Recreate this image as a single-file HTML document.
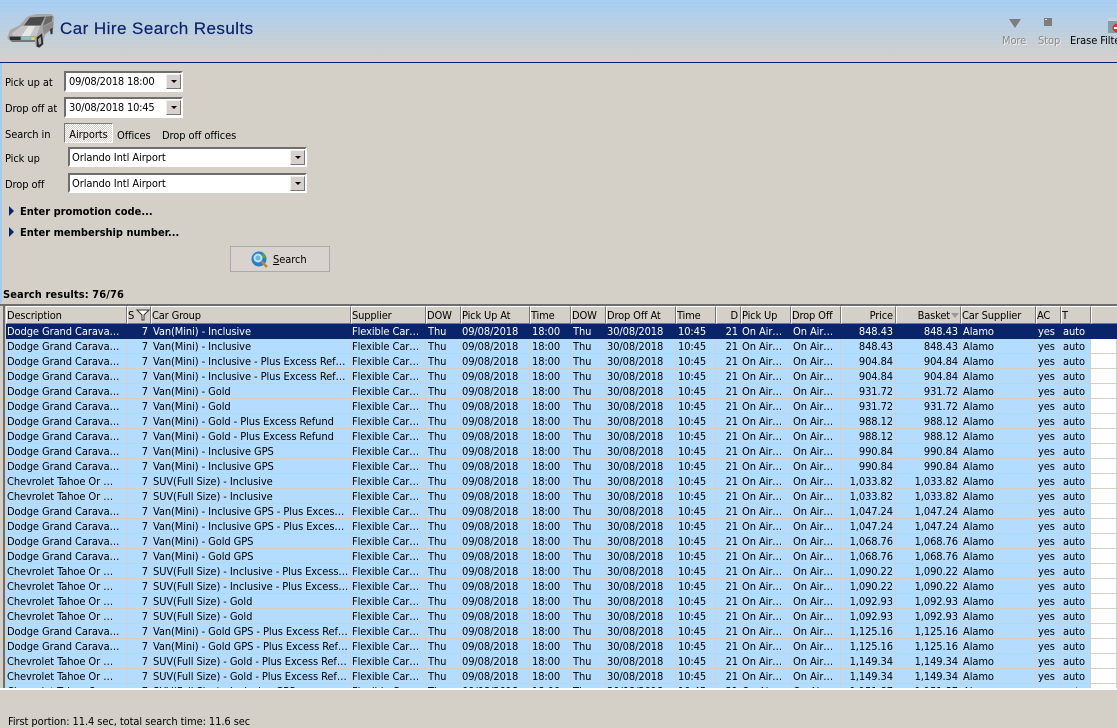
<!DOCTYPE html>
<html><head><meta charset="utf-8"><title>Car Hire Search Results</title>
<style>
html,body{margin:0;padding:0}
body{width:1117px;height:726px;overflow:hidden;position:relative;background:#d4d0c8;font:11px "DejaVu Sans Condensed","DejaVu Sans","Liberation Sans",sans-serif;color:#000;letter-spacing:-.08px}
.a{position:absolute;white-space:nowrap}
#top{left:0;top:0;width:1117px;height:62px;background:repeating-linear-gradient(0deg,rgba(255,255,255,.03) 0 2px,transparent 2px 4px),linear-gradient(#a6cdf5,#d4d0c8)}
#ln{left:0;top:62px;width:1117px;height:1px;background:#0a246a}
#edge{left:0;top:63px;width:2px;height:240px;background:#a6caf0}
h1{position:absolute;margin:0;left:60px;top:19px;font:400 17px/20px "Liberation Sans",sans-serif;letter-spacing:.45px;color:#0a246a;white-space:nowrap;-webkit-text-stroke:.2px #0a246a}
.field{box-sizing:border-box;position:absolute;background:#fff;border:2px solid;border-color:#6e6e6e #fff #fff #6e6e6e;line-height:18px;padding-left:2px;white-space:nowrap}
.dt{width:119px;height:21px;left:64px;padding-left:3px;letter-spacing:-.2px}
.dd{width:239px;height:20px;left:68px}
.btn{position:absolute;right:0;top:1px;width:15px;height:15px;box-sizing:border-box;background:#d8d0cc;border:1px solid;border-color:#eee #777 #777 #eee}
.btn:after{content:"";position:absolute;left:4px;top:5px;border:3px solid transparent;border-top:3px solid #000;border-bottom:0}
.tri{position:absolute;width:0;height:0;border:5px solid transparent;border-left:5px solid #0a246a;border-right:0}
b.a{font-weight:700;letter-spacing:0;font-family:"DejaVu Sans Condensed","DejaVu Sans",sans-serif}
#grid{left:6px;top:306px;width:1111px;height:382px;overflow:hidden;background:#fff}
table{border-collapse:separate;border-spacing:0;table-layout:fixed;width:1111px}
th{box-sizing:border-box;height:18px;padding:0 2px 0 0;font-weight:400;text-align:left;background:#d4d0c8;border:1px solid;border-color:#fff #777 #777 #fff;overflow:hidden;white-space:nowrap;letter-spacing:-.15px}
td{box-sizing:border-box;height:15px;padding:1px 0 0 2px;background:#b3dcff;border-right:1px solid #d4d0c8;border-bottom:1px solid #d4d0c8;overflow:hidden;white-space:nowrap;line-height:13px}
td:nth-child(1),td:nth-child(4),td:nth-child(6),td:nth-child(9),td:nth-child(12){padding-left:1px}
tr.s td{background:#0a246a;color:#fff;border-color:#0a246a}
td:nth-child(19){background:#fff}
tr.s td:nth-child(19){background:#0a246a}
td:nth-child(2),td:nth-child(11),td:nth-child(14),td:nth-child(15),th.r{text-align:right;padding:1px 2px 0 0}
th.r{padding-top:0}
</style></head><body>
<div class="a" id="top"></div><div class="a" id="ln"></div><div class="a" id="edge"></div>
<svg class="a" style="left:0;top:0" width="60" height="50" viewBox="0 0 180 150"><path d="M22 112L30 90L60 75L82 50L110 42L155 42L163 52L160 85L135 105L128 135L120 143L108 140L105 125L35 125L24 118Z" fill="#a8a8a8"/><path d="M72 76L90 52L135 50L122 76Z" fill="#4a4a4a"/><path d="M138 50L158 48L155 65L128 78Z" fill="#6a6a6a"/><path d="M128 80L160 65L158 85L132 103Z" fill="#8a8a8a"/><path d="M35 100L65 78L120 78L110 108L40 108Z" fill="#c4c4c4"/><path d="M65 108L85 78L105 78L90 108Z" fill="#e6e6e6"/><path d="M28 110L62 110L62 120L30 120Z" fill="#2e2e2e"/><path d="M68 110L92 110L90 118L68 118Z" fill="#7fc4d8"/><path d="M94 112h10v8h-10z" fill="#e8d840"/><path d="M30 120L105 120L105 126L36 126Z" fill="#777"/><path d="M110 112L126 100L130 132L118 143L110 140Z" fill="#2c2c2c"/><path d="M114 118L122 110L124 130L117 135Z" fill="#aaa"/><path d="M150 88l8-5v18l-6 3Z" fill="#333"/></svg>
<h1>Car Hire Search Results</h1>
<svg class="a" style="left:1009px;top:18px" width="12" height="11"><path d="M0 1H12L6 10Z" fill="#7d7d7d"/></svg>
<svg class="a" style="left:1044px;top:18px" width="8" height="8"><rect width="8" height="8" fill="#7d7d7d"/><path d="M1 1h2v1H1z" fill="#ddd"/></svg>
<div class="a" style="left:1002px;top:34px;color:#8a8a8a;text-shadow:1px 1px 0 #eee">More</div>
<div class="a" style="left:1038px;top:34px;color:#8a8a8a;text-shadow:1px 1px 0 #eee">Stop</div>
<div class="a" style="left:1070px;top:34px">Erase Filter</div>
<svg class="a" style="left:1108px;top:18px" width="9" height="15"><rect x="0" y="1" width="9" height="14" fill="#7f9dab"/><rect x="0" y="0" width="9" height="3" fill="#c5d5dc"/><circle cx="9" cy="10" r="4.5" fill="#d8322a"/><rect x="6" y="9" width="3" height="2" fill="#fff"/></svg>

<div class="a" style="left:5px;top:76px">Pick up at</div>
<div class="field dt" style="top:71px">09/08/2018 18:00<span class="btn"></span></div>
<div class="a" style="left:5px;top:102px">Drop off at</div>
<div class="field dt" style="top:97px">30/08/2018 10:45<span class="btn"></span></div>
<div class="a" style="left:5px;top:128px">Search in</div>
<div class="a" style="left:64px;top:123px;width:49px;height:20px;box-sizing:border-box;border:1px solid;border-color:#777 #fff #fff #777;background:repeating-conic-gradient(#fff 0 25%,#d4d0c8 0 50%) 0 0/2px 2px;text-align:center;line-height:21px">Airports</div>
<div class="a" style="left:117px;top:129px">Offices</div>
<div class="a" style="left:162px;top:129px">Drop off offices</div>
<div class="a" style="left:5px;top:152px">Pick up</div>
<div class="field dd" style="top:147px">Orlando Intl Airport<span class="btn"></span></div>
<div class="a" style="left:5px;top:178px">Drop off</div>
<div class="field dd" style="top:173px">Orlando Intl Airport<span class="btn"></span></div>
<div class="tri" style="left:9px;top:206px"></div>
<b class="a" style="left:20px;top:205px">Enter promotion code...</b>
<div class="tri" style="left:9px;top:227px"></div>
<b class="a" style="left:20px;top:226px">Enter membership number...</b>
<div class="a" style="left:230px;top:246px;width:100px;height:26px;box-sizing:border-box;background:#d8d3cf;border:1px solid;border-color:#eee #888 #888 #eee;outline:1px solid #aaa;outline-offset:-1px"></div>
<svg class="a" style="left:251px;top:251px" width="17" height="17"><circle cx="8" cy="8" r="7.5" fill="#2a7ec8"/><path d="M12 1.5a7.5 7.5 0 0 1 3 6l-4-1z" fill="#5aa83a"/><circle cx="7" cy="7" r="4.5" fill="#bfe3ef"/><circle cx="7" cy="7" r="2.5" fill="#6fb4dc"/><path d="M10.5 10.5L16 16" stroke="#b58b2a" stroke-width="2.5"/></svg>
<div class="a" style="left:273px;top:253px"><u>S</u>earch</div>
<b class="a" style="left:3px;top:288px;letter-spacing:.1px">Search results: 76/76</b>
<div class="a" style="left:0;top:304px;width:1117px;height:2px;background:#6e6e6e"></div>
<div class="a" style="left:3px;top:304px;width:2px;height:385px;background:#6e6e6e"></div>
<div class="a" style="left:0;top:688px;width:1117px;height:2px;background:#fff"></div>
<div class="a" id="grid">
<table><colgroup><col width="121"><col width="24"><col width="200"><col width="75"><col width="35"><col width="69"><col width="41"><col width="35"><col width="70"><col width="40"><col width="25"><col width="50"><col width="50"><col width="55"><col width="65"><col width="75"><col width="25"><col width="30"><col width="26"></colgroup>
<tr><th>Description</th><th style="position:relative">S<svg style="position:absolute;left:8px;top:2px" width="14" height="12"><path d="M1 1H13L8 6V11H6V6Z" fill="#fff" stroke="#333"/></svg></th><th>Car Group</th><th>Supplier</th><th>DOW</th><th>Pick Up At</th><th>Time</th><th>DOW</th><th>Drop Off At</th><th>Time</th><th class="r">D</th><th>Pick Up</th><th>Drop Off</th><th class="r">Price</th><th class="r" style="padding-right:10px;position:relative">Basket<svg style="position:absolute;right:1px;top:6px" width="8" height="5"><path d="M0 0H8L4 5Z" fill="#999"/></svg></th><th>Car Supplier</th><th>AC</th><th>T</th><th style="border-right:0"></th></tr>
<tr class="s"><td>Dodge Grand Carava…</td><td>7</td><td>Van(Mini) - Inclusive</td><td>Flexible Car…</td><td>Thu</td><td>09/08/2018</td><td>18:00</td><td>Thu</td><td>30/08/2018</td><td>10:45</td><td>21</td><td>On Air…</td><td>On Air…</td><td>848.43</td><td>848.43</td><td>Alamo</td><td>yes</td><td>auto</td><td></td></tr>
<tr><td>Dodge Grand Carava…</td><td>7</td><td>Van(Mini) - Inclusive</td><td>Flexible Car…</td><td>Thu</td><td>09/08/2018</td><td>18:00</td><td>Thu</td><td>30/08/2018</td><td>10:45</td><td>21</td><td>On Air…</td><td>On Air…</td><td>848.43</td><td>848.43</td><td>Alamo</td><td>yes</td><td>auto</td><td></td></tr>
<tr><td>Dodge Grand Carava…</td><td>7</td><td>Van(Mini) - Inclusive - Plus Excess Ref…</td><td>Flexible Car…</td><td>Thu</td><td>09/08/2018</td><td>18:00</td><td>Thu</td><td>30/08/2018</td><td>10:45</td><td>21</td><td>On Air…</td><td>On Air…</td><td>904.84</td><td>904.84</td><td>Alamo</td><td>yes</td><td>auto</td><td></td></tr>
<tr><td>Dodge Grand Carava…</td><td>7</td><td>Van(Mini) - Inclusive - Plus Excess Ref…</td><td>Flexible Car…</td><td>Thu</td><td>09/08/2018</td><td>18:00</td><td>Thu</td><td>30/08/2018</td><td>10:45</td><td>21</td><td>On Air…</td><td>On Air…</td><td>904.84</td><td>904.84</td><td>Alamo</td><td>yes</td><td>auto</td><td></td></tr>
<tr><td>Dodge Grand Carava…</td><td>7</td><td>Van(Mini) - Gold</td><td>Flexible Car…</td><td>Thu</td><td>09/08/2018</td><td>18:00</td><td>Thu</td><td>30/08/2018</td><td>10:45</td><td>21</td><td>On Air…</td><td>On Air…</td><td>931.72</td><td>931.72</td><td>Alamo</td><td>yes</td><td>auto</td><td></td></tr>
<tr><td>Dodge Grand Carava…</td><td>7</td><td>Van(Mini) - Gold</td><td>Flexible Car…</td><td>Thu</td><td>09/08/2018</td><td>18:00</td><td>Thu</td><td>30/08/2018</td><td>10:45</td><td>21</td><td>On Air…</td><td>On Air…</td><td>931.72</td><td>931.72</td><td>Alamo</td><td>yes</td><td>auto</td><td></td></tr>
<tr><td>Dodge Grand Carava…</td><td>7</td><td>Van(Mini) - Gold - Plus Excess Refund</td><td>Flexible Car…</td><td>Thu</td><td>09/08/2018</td><td>18:00</td><td>Thu</td><td>30/08/2018</td><td>10:45</td><td>21</td><td>On Air…</td><td>On Air…</td><td>988.12</td><td>988.12</td><td>Alamo</td><td>yes</td><td>auto</td><td></td></tr>
<tr><td>Dodge Grand Carava…</td><td>7</td><td>Van(Mini) - Gold - Plus Excess Refund</td><td>Flexible Car…</td><td>Thu</td><td>09/08/2018</td><td>18:00</td><td>Thu</td><td>30/08/2018</td><td>10:45</td><td>21</td><td>On Air…</td><td>On Air…</td><td>988.12</td><td>988.12</td><td>Alamo</td><td>yes</td><td>auto</td><td></td></tr>
<tr><td>Dodge Grand Carava…</td><td>7</td><td>Van(Mini) - Inclusive GPS</td><td>Flexible Car…</td><td>Thu</td><td>09/08/2018</td><td>18:00</td><td>Thu</td><td>30/08/2018</td><td>10:45</td><td>21</td><td>On Air…</td><td>On Air…</td><td>990.84</td><td>990.84</td><td>Alamo</td><td>yes</td><td>auto</td><td></td></tr>
<tr><td>Dodge Grand Carava…</td><td>7</td><td>Van(Mini) - Inclusive GPS</td><td>Flexible Car…</td><td>Thu</td><td>09/08/2018</td><td>18:00</td><td>Thu</td><td>30/08/2018</td><td>10:45</td><td>21</td><td>On Air…</td><td>On Air…</td><td>990.84</td><td>990.84</td><td>Alamo</td><td>yes</td><td>auto</td><td></td></tr>
<tr><td>Chevrolet Tahoe Or …</td><td>7</td><td>SUV(Full Size) - Inclusive</td><td>Flexible Car…</td><td>Thu</td><td>09/08/2018</td><td>18:00</td><td>Thu</td><td>30/08/2018</td><td>10:45</td><td>21</td><td>On Air…</td><td>On Air…</td><td>1,033.82</td><td>1,033.82</td><td>Alamo</td><td>yes</td><td>auto</td><td></td></tr>
<tr><td>Chevrolet Tahoe Or …</td><td>7</td><td>SUV(Full Size) - Inclusive</td><td>Flexible Car…</td><td>Thu</td><td>09/08/2018</td><td>18:00</td><td>Thu</td><td>30/08/2018</td><td>10:45</td><td>21</td><td>On Air…</td><td>On Air…</td><td>1,033.82</td><td>1,033.82</td><td>Alamo</td><td>yes</td><td>auto</td><td></td></tr>
<tr><td>Dodge Grand Carava…</td><td>7</td><td>Van(Mini) - Inclusive GPS - Plus Exces…</td><td>Flexible Car…</td><td>Thu</td><td>09/08/2018</td><td>18:00</td><td>Thu</td><td>30/08/2018</td><td>10:45</td><td>21</td><td>On Air…</td><td>On Air…</td><td>1,047.24</td><td>1,047.24</td><td>Alamo</td><td>yes</td><td>auto</td><td></td></tr>
<tr><td>Dodge Grand Carava…</td><td>7</td><td>Van(Mini) - Inclusive GPS - Plus Exces…</td><td>Flexible Car…</td><td>Thu</td><td>09/08/2018</td><td>18:00</td><td>Thu</td><td>30/08/2018</td><td>10:45</td><td>21</td><td>On Air…</td><td>On Air…</td><td>1,047.24</td><td>1,047.24</td><td>Alamo</td><td>yes</td><td>auto</td><td></td></tr>
<tr><td>Dodge Grand Carava…</td><td>7</td><td>Van(Mini) - Gold GPS</td><td>Flexible Car…</td><td>Thu</td><td>09/08/2018</td><td>18:00</td><td>Thu</td><td>30/08/2018</td><td>10:45</td><td>21</td><td>On Air…</td><td>On Air…</td><td>1,068.76</td><td>1,068.76</td><td>Alamo</td><td>yes</td><td>auto</td><td></td></tr>
<tr><td>Dodge Grand Carava…</td><td>7</td><td>Van(Mini) - Gold GPS</td><td>Flexible Car…</td><td>Thu</td><td>09/08/2018</td><td>18:00</td><td>Thu</td><td>30/08/2018</td><td>10:45</td><td>21</td><td>On Air…</td><td>On Air…</td><td>1,068.76</td><td>1,068.76</td><td>Alamo</td><td>yes</td><td>auto</td><td></td></tr>
<tr><td>Chevrolet Tahoe Or …</td><td>7</td><td>SUV(Full Size) - Inclusive - Plus Excess…</td><td>Flexible Car…</td><td>Thu</td><td>09/08/2018</td><td>18:00</td><td>Thu</td><td>30/08/2018</td><td>10:45</td><td>21</td><td>On Air…</td><td>On Air…</td><td>1,090.22</td><td>1,090.22</td><td>Alamo</td><td>yes</td><td>auto</td><td></td></tr>
<tr><td>Chevrolet Tahoe Or …</td><td>7</td><td>SUV(Full Size) - Inclusive - Plus Excess…</td><td>Flexible Car…</td><td>Thu</td><td>09/08/2018</td><td>18:00</td><td>Thu</td><td>30/08/2018</td><td>10:45</td><td>21</td><td>On Air…</td><td>On Air…</td><td>1,090.22</td><td>1,090.22</td><td>Alamo</td><td>yes</td><td>auto</td><td></td></tr>
<tr><td>Chevrolet Tahoe Or …</td><td>7</td><td>SUV(Full Size) - Gold</td><td>Flexible Car…</td><td>Thu</td><td>09/08/2018</td><td>18:00</td><td>Thu</td><td>30/08/2018</td><td>10:45</td><td>21</td><td>On Air…</td><td>On Air…</td><td>1,092.93</td><td>1,092.93</td><td>Alamo</td><td>yes</td><td>auto</td><td></td></tr>
<tr><td>Chevrolet Tahoe Or …</td><td>7</td><td>SUV(Full Size) - Gold</td><td>Flexible Car…</td><td>Thu</td><td>09/08/2018</td><td>18:00</td><td>Thu</td><td>30/08/2018</td><td>10:45</td><td>21</td><td>On Air…</td><td>On Air…</td><td>1,092.93</td><td>1,092.93</td><td>Alamo</td><td>yes</td><td>auto</td><td></td></tr>
<tr><td>Dodge Grand Carava…</td><td>7</td><td>Van(Mini) - Gold GPS - Plus Excess Ref…</td><td>Flexible Car…</td><td>Thu</td><td>09/08/2018</td><td>18:00</td><td>Thu</td><td>30/08/2018</td><td>10:45</td><td>21</td><td>On Air…</td><td>On Air…</td><td>1,125.16</td><td>1,125.16</td><td>Alamo</td><td>yes</td><td>auto</td><td></td></tr>
<tr><td>Dodge Grand Carava…</td><td>7</td><td>Van(Mini) - Gold GPS - Plus Excess Ref…</td><td>Flexible Car…</td><td>Thu</td><td>09/08/2018</td><td>18:00</td><td>Thu</td><td>30/08/2018</td><td>10:45</td><td>21</td><td>On Air…</td><td>On Air…</td><td>1,125.16</td><td>1,125.16</td><td>Alamo</td><td>yes</td><td>auto</td><td></td></tr>
<tr><td>Chevrolet Tahoe Or …</td><td>7</td><td>SUV(Full Size) - Gold - Plus Excess Ref…</td><td>Flexible Car…</td><td>Thu</td><td>09/08/2018</td><td>18:00</td><td>Thu</td><td>30/08/2018</td><td>10:45</td><td>21</td><td>On Air…</td><td>On Air…</td><td>1,149.34</td><td>1,149.34</td><td>Alamo</td><td>yes</td><td>auto</td><td></td></tr>
<tr><td>Chevrolet Tahoe Or …</td><td>7</td><td>SUV(Full Size) - Gold - Plus Excess Ref…</td><td>Flexible Car…</td><td>Thu</td><td>09/08/2018</td><td>18:00</td><td>Thu</td><td>30/08/2018</td><td>10:45</td><td>21</td><td>On Air…</td><td>On Air…</td><td>1,149.34</td><td>1,149.34</td><td>Alamo</td><td>yes</td><td>auto</td><td></td></tr>
<tr><td>Chevrolet Tahoe Or …</td><td>7</td><td>SUV(Full Size) - Inclusive GPS</td><td>Flexible Car…</td><td>Thu</td><td>09/08/2018</td><td>18:00</td><td>Thu</td><td>30/08/2018</td><td>10:45</td><td>21</td><td>On Air…</td><td>On Air…</td><td>1,151.87</td><td>1,151.87</td><td>Alamo</td><td>yes</td><td>auto</td><td></td></tr>
</table></div>
<div class="a" style="left:8px;top:715px">First portion: 11.4 sec, total search time: 11.6 sec</div>
</body></html>
